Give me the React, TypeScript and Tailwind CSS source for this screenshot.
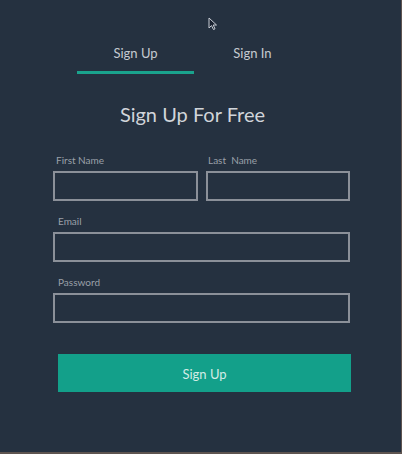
import React from 'react';

const font = { fontFamily: '"Lato", "Open Sans", sans-serif' };

function Field({ label, className = '' }: { label: string; className?: string }) {
    return (
        <div className={`flex flex-col ${className}`}>
            <label className="text-[10px] leading-[14px] text-[#9aa0a9] pl-[3px] mb-[4px] whitespace-pre">{label}</label>
            <input className="h-[30px] w-full border-2 border-[#8b9099] bg-transparent outline-none" />
        </div>
    );
}

export default function App() {
    return (
        <div className="w-[402px] h-[454px] flex flex-col bg-[#5e5450]" style={font}>
            <div className="relative w-[401px] h-[452px] bg-[#253140] flex flex-col">
                {/* mouse cursor */}
                <svg className="absolute left-[208px] top-[17px]" width="10" height="14" viewBox="0 0 10 14">
                    <path d="M1 1 L1 11 L3.5 8.6 L5.5 12.5 L7 11.8 L5.2 8 L8.5 8 Z" fill="#1a2230" stroke="#c9ced6" strokeWidth="1" />
                </svg>

                {/* Tabs */}
                <div className="flex ml-[77px] mt-[43px]">
                    <div className="w-[117px] flex flex-col items-center">
                        <span className="text-[13px] leading-[20px] text-[#c6cad0]">Sign Up</span>
                        <div className="mt-[8px] h-[3px] w-full bg-[#1aa38d]" />
                    </div>
                    <div className="w-[117px] flex flex-col items-center">
                        <span className="text-[13px] leading-[20px] text-[#c6cad0]">Sign In</span>
                        <div className="mt-[8px] h-[3px] w-full" />
                    </div>
                </div>

                {/* Title */}
                <h1 className="w-[385px] text-center mt-[26px] text-[20px] leading-[28px] text-[#d1d5da]">Sign Up For Free</h1>

                {/* Form */}
                <form className="flex flex-col ml-[53px] w-[297px] mt-[25px]">
                    <div className="flex gap-[8px]">
                        <Field label="First Name" className="w-[145px]" />
                        <Field label="Last  Name" className="w-[144px] [&>label]:pl-[2px]" />
                    </div>
                    <Field label="Email" className="mt-[13px] [&>label]:pl-[5px]" />
                    <Field label="Password" className="mt-[13px] [&>label]:pl-[5px]" />
                    <button
                        type="button"
                        className="mt-[31px] ml-[5px] w-[293px] h-[38px] pt-[3px] bg-[#13a08a] text-[13px] text-[#d3ece6]"
                    >
                        Sign Up
                    </button>
                </form>
            </div>
        </div>
    );
}
